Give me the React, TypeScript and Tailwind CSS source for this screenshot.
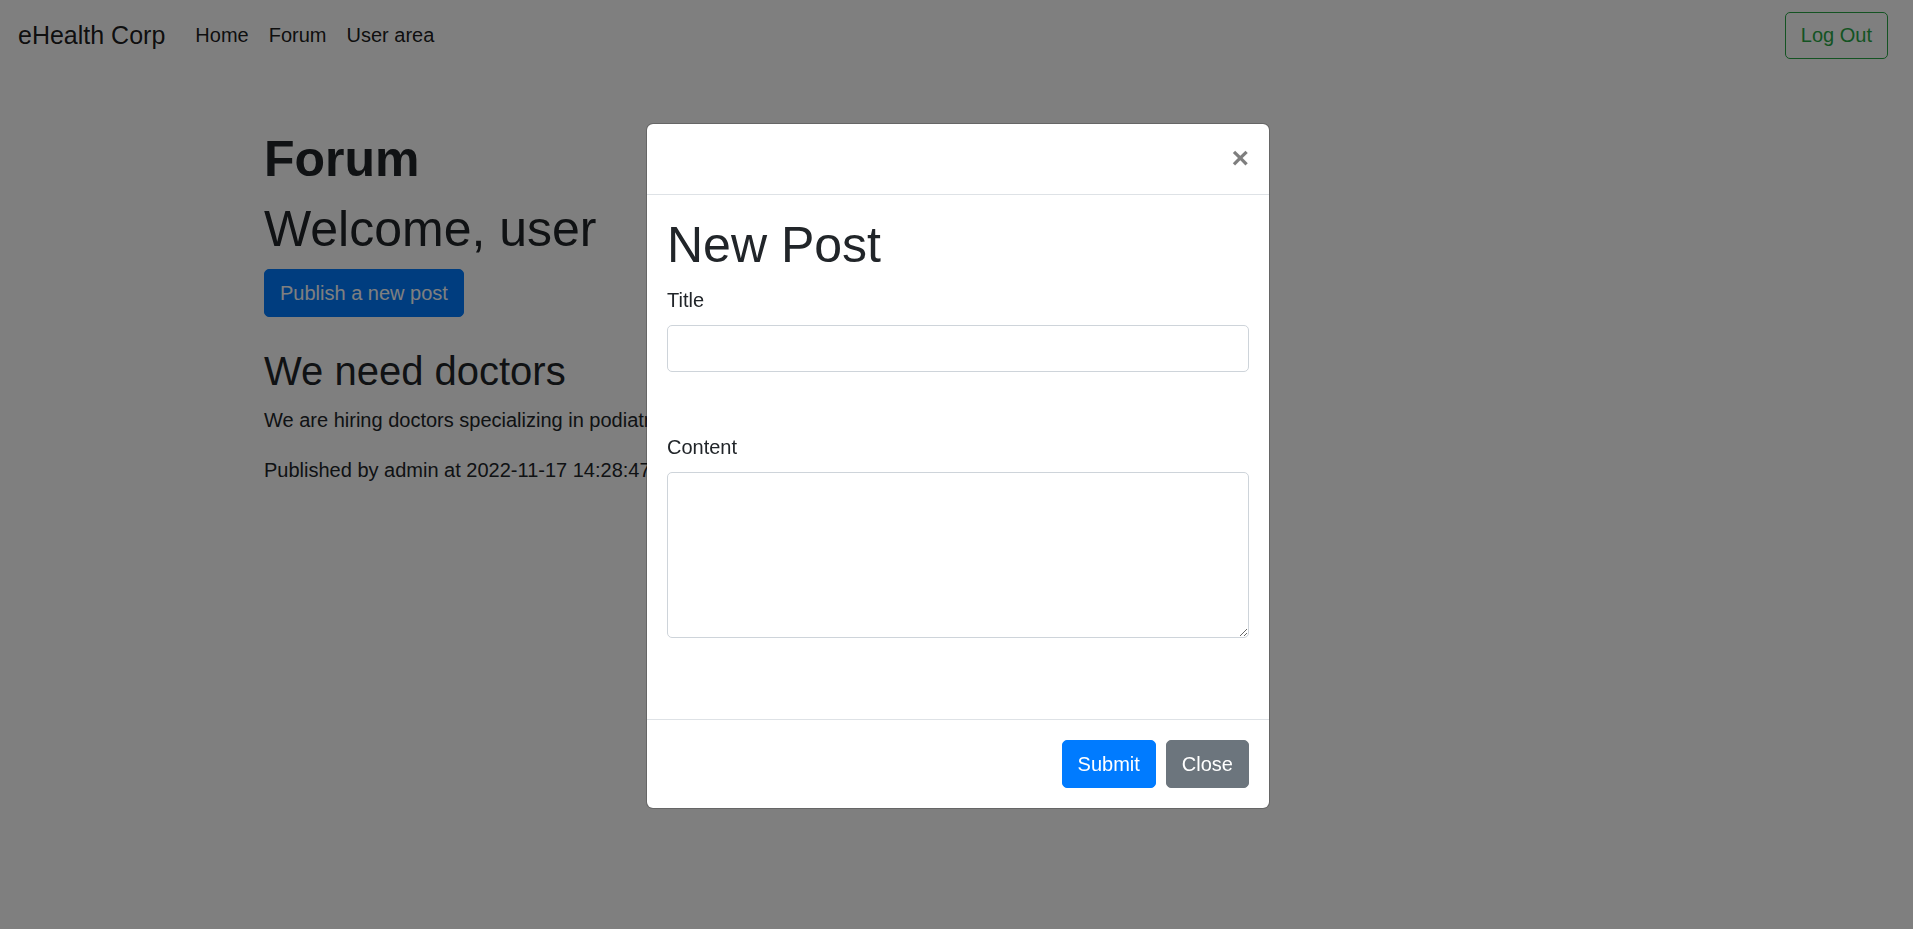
import React from "react";

export default function App() {
  const font = { fontFamily: '"Liberation Sans", Arial, sans-serif' };
  return (
    <div className="min-h-[929px] bg-white text-[#212529]" style={font}>
      {/* Navbar */}
      <nav className="flex h-[70px] items-center pl-[18px] pr-[25px]">
        <span className="mr-[20px] text-[25px] leading-[37px] text-black/90">eHealth Corp</span>
        <div className="flex items-center">
          <span className="px-[10px] text-[20px] leading-[30px] text-black/90">Home</span>
          <span className="px-[10px] text-[20px] leading-[30px] text-black/90">Forum</span>
          <span className="px-[10px] text-[20px] leading-[30px] text-black/90">User area</span>
        </div>
        <div className="ml-auto">
          <button className="h-[47px] rounded-[5px] border border-[#28a745] px-[15px] text-[20px] leading-[30px] text-[#28a745]">
            Log Out
          </button>
        </div>
      </nav>

      {/* Main */}
      <main className="mx-auto mt-[59px] w-[1425px] pl-[20px] pr-[18px]">
        <h1 className="mb-[10px] text-[50px] font-bold leading-[60px]">Forum</h1>
        <h1 className="mb-[10px] text-[50px] font-normal leading-[60px]">Welcome, user</h1>
        <button className="h-[48px] rounded-[5px] border border-[#007bff] bg-[#007bff] px-[15px] text-[20px] leading-[30px] text-white">
          Publish a new post
        </button>
        <div className="mt-[30px]">
          <h2 className="mb-[10px] text-[40px] font-normal leading-[48px]">We need doctors</h2>
          <p className="mb-[20px] text-[20px] leading-[30px]">
            We are hiring doctors specializing in podiatry. Send us your CV.
          </p>
          <p className="mb-[20px] text-[20px] leading-[30px]">
            Published by admin at 2022-11-17 14:28:47
          </p>
        </div>
      </main>

      {/* Backdrop */}
      <div className="fixed inset-0 bg-black/50" />

      {/* Modal */}
      <div className="fixed inset-0 flex items-center justify-center pl-[3px] pt-[2px]">
        <div className="w-[624px] rounded-[7px] border border-black/20 bg-white bg-clip-padding">
          <div className="flex h-[71px] items-start justify-end border-b border-[#dee2e6] px-[20px] pt-[20px]">
            <span
              className="mt-[-1px] text-[30px] font-bold leading-[30px] text-black opacity-50"
              style={{ textShadow: "0 1px 0 #fff" }}
            >
              ×
            </span>
          </div>
          <div className="p-[20px]">
            <h1 className="mb-[10px] text-[50px] font-normal leading-[60px] text-[#212529]">New Post</h1>
            <label className="mb-[10px] block text-[20px] leading-[30px]">Title</label>
            <input
              type="text"
              className="block h-[47px] w-full rounded-[5px] border border-[#ced4da] bg-white px-[15px] text-[20px] outline-none"
            />
            <label className="mb-[10px] mt-[60px] block text-[20px] leading-[30px]">Content</label>
            <textarea className="mb-[61px] block h-[166px] w-full rounded-[5px] border border-[#ced4da] bg-white px-[15px] py-[7px] text-[20px] outline-none" />
          </div>
          <div className="flex items-center justify-end gap-[10px] border-t border-[#dee2e6] px-[20px] py-[20px]">
            <button className="h-[48px] rounded-[5px] border border-[#007bff] bg-[#007bff] px-[15px] text-[20px] leading-[30px] text-white">
              Submit
            </button>
            <button className="h-[48px] rounded-[5px] border border-[#6c757d] bg-[#6c757d] px-[15px] text-[20px] leading-[30px] text-white">
              Close
            </button>
          </div>
        </div>
      </div>
    </div>
  );
}
